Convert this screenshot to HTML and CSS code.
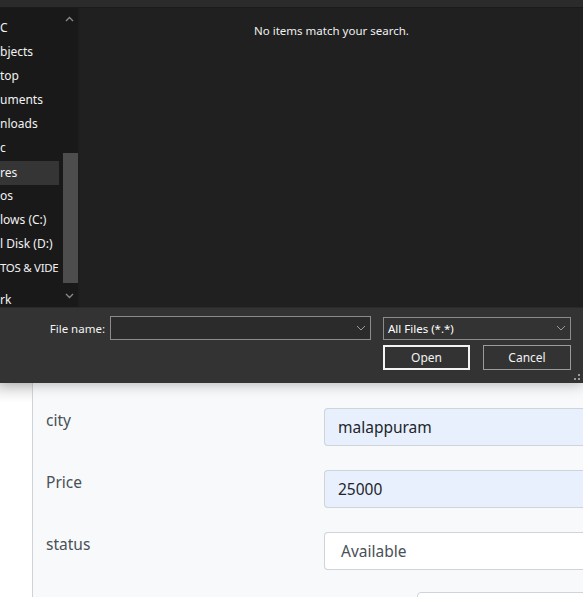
FILE: index.html
```html
<!DOCTYPE html>
<html>
<head>
<meta charset="utf-8">
<link rel="stylesheet" href="styles.css">
</head>
<body>
<div class="dialog">
  <div class="topbar"></div>
  <div class="body">
    <div class="nav">
      <ul class="tree">
        <li>C</li>
        <li>bjects</li>
        <li>top</li>
        <li>uments</li>
        <li>nloads</li>
        <li>c</li>
        <li class="sel">res</li>
        <li>os</li>
        <li>lows (C:)</li>
        <li>l Disk (D:)</li>
        <li class="tight">TOS &amp; VIDE</li>
        <li class="gap"></li>
        <li>rk</li>
      </ul>
      <div class="scroll">
        <svg class="arrow up" width="9" height="6" viewBox="0 0 9 6"><path d="M1 5 L4.5 1.5 L8 5" fill="none" stroke="#8a8a8a" stroke-width="1.3"/></svg>
        <div class="thumb"></div>
        <svg class="arrow down" width="9" height="6" viewBox="0 0 9 6"><path d="M1 1 L4.5 4.5 L8 1" fill="none" stroke="#8a8a8a" stroke-width="1.3"/></svg>
      </div>
    </div>
    <div class="main">
      <p class="empty">No items match your search.</p>
    </div>
  </div>
  <div class="footer">
    <div class="row">
      <label class="fname">File name:</label>
      <div class="combo wide">
        <span></span>
        <svg width="10" height="6" viewBox="0 0 10 6"><path d="M1 1 L5 5 L9 1" fill="none" stroke="#9a9a9a" stroke-width="1"/></svg>
      </div>
      <div class="combo filter">
        <span>All Files (*.*)</span>
        <svg width="10" height="6" viewBox="0 0 10 6"><path d="M1 1 L5 5 L9 1" fill="none" stroke="#9a9a9a" stroke-width="1"/></svg>
      </div>
    </div>
    <div class="buttons">
      <button class="btn primary">Open</button>
      <button class="btn">Cancel</button>
    </div>
    <div class="grip"><i></i><i></i><i></i></div>
  </div>
</div>
<div class="page">
  <div class="side"></div>
  <div class="content">
    <div class="form">
      <div class="label">city</div>
      <div class="input auto">malappuram</div>
      <div class="label">Price</div>
      <div class="input auto">25000</div>
      <div class="label">status</div>
      <div class="input select">Available</div>
    </div>
    <div class="next"></div>
  </div>
</div>
</body>
</html>
```
FILE: styles.css
```css
* { box-sizing: border-box; }
html, body { margin: 0; padding: 0; }
body {
  width: 583px;
  height: 597px;
  overflow: hidden;
  background: #f8f9fa;
  font-family: "Noto Sans", "Open Sans", sans-serif;
}
.dialog {
  position: relative;
  z-index: 2;
  height: 383px;
  background: #202020;
  color: #ffffff;
  font-size: 11.5px;
  display: flex;
  flex-direction: column;
  box-shadow: 0 2px 12px rgba(0,0,0,0.25);
}
.topbar {
  height: 8px;
  background: #2b2b2b;
  border-bottom: 1px solid #1b1b1b;
}
.body {
  height: 299px;
  display: flex;
}
.nav {
  width: 80px;
  background: #191919;
  border-right: 2px solid #1e1e1e;
  display: flex;
  position: relative;
}
.tree {
  list-style: none;
  margin: 0;
  padding: 8px 0 0 0;
  width: 61px;
  overflow: hidden;
}
.tree li {
  height: 24px;
  line-height: 24px;
  white-space: nowrap;
  overflow: hidden;
  font-size: 12px;
  color: #f2f2f2;
}
.tree li.tight { font-size: 11.5px; letter-spacing: -0.3px; }
.tree li.sel {
  background: #353535;
  width: 59px;
  margin-top: 1px;
  margin-bottom: -1px;
}
.tree li.gap { height: 8px; }
.scroll {
  width: 17px;
  display: flex;
  flex-direction: column;
  align-items: center;
  padding-top: 8px;
}
.arrow { display: block; }
.thumb {
  width: 15px;
  height: 130px;
  background: #4d4d4d;
  margin-top: 131px;
  margin-left: 1px;
}
.arrow.down { margin-top: 10px; }
.main {
  flex: 1;
  background: #202020;
}
.empty {
  margin: 15px 0 0 0;
  text-align: center;
  font-size: 11.5px;
  color: #f0f0f0;
}
.footer {
  flex: 1;
  background: #333333;
  border-top: 1px solid #2a2a2a;
  padding-top: 8px;
  position: relative;
}
.row {
  display: flex;
  align-items: center;
  height: 24px;
}
.fname {
  width: 110px;
  text-align: right;
  padding-right: 5px;
  font-size: 11.5px;
  color: #f2f2f2;
}
.combo {
  height: 24px;
  border: 1px solid #8c8c8c;
  background: #2b2b2b;
  display: flex;
  align-items: center;
  justify-content: space-between;
  padding: 0 4px 0 4px;
  font-size: 11.5px;
}
.combo.wide { width: 261px; }
.combo.filter { width: 188px; margin-left: 12px; height: 23px; background: #333; }
.buttons {
  display: flex;
  gap: 13px;
  margin-left: 383px;
  margin-top: 5px;
}
.btn {
  height: 25px;
  width: 88px;
  background: #333333;
  color: #f2f2f2;
  border: 1px solid #9b9b9b;
  font-family: inherit;
  font-size: 12px;
  padding: 0;
}
.btn.primary {
  width: 87px;
  border: 2px solid #f4f4f4;
}
.grip {
  position: absolute;
  right: 3px;
  bottom: 3px;
  width: 6px;
  height: 6px;
}
.grip i {
  position: absolute;
  width: 2px;
  height: 2px;
  background: #9a9a9a;
}
.grip i:nth-child(1) { right: 0; top: 0; }
.grip i:nth-child(2) { right: 0; bottom: 0; }
.grip i:nth-child(3) { left: 0; bottom: 0; }
.page {
  height: 214px;
  display: flex;
}
.side {
  width: 33px;
  background: linear-gradient(#e6e6e6, #ffffff 20px);
  border-right: 1px solid #cfd2d6;
}
.content {
  flex: 1;
  background: #f8f9fa;
  padding-top: 25px;
  position: relative;
}
.form {
  display: grid;
  grid-template-columns: 278px 1fr;
  grid-auto-rows: 38px;
  row-gap: 24px;
  padding-left: 13px;
}
.label {
  font-size: 15.5px;
  color: #495057;
  padding-top: 1px;
}
.input {
  height: 38px;
  border: 1px solid #ced4da;
  border-right: none;
  border-radius: 4px 0 0 4px;
  font-size: 15.5px;
  line-height: 36px;
  padding-left: 13px;
  color: #212529;
  background: #fff;
}
.input.auto { background: #e8f0fe; }
.input.select { padding-left: 16px; color: #495057; }
.next {
  position: absolute;
  left: 384px;
  top: 209px;
  width: 200px;
  height: 20px;
  background: #fff;
  border: 1px solid #ced4da;
  border-radius: 4px 0 0 0;
}
```
